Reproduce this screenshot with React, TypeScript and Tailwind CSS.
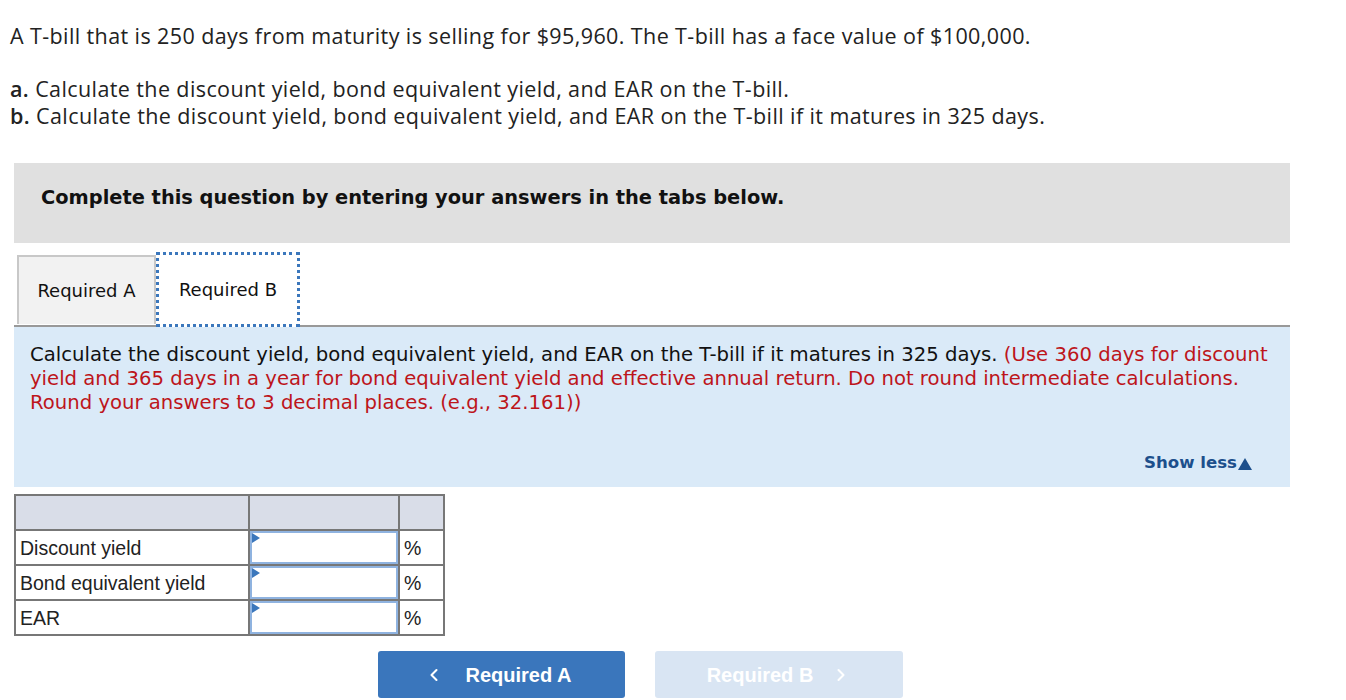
import { ChevronLeft, ChevronRight } from 'lucide-react';

const rows = ['Discount yield', 'Bond equivalent yield', 'EAR'];

function AnswerCell() {
  return (
    <div className="relative h-full w-full border-2 border-[#8fb3e0] bg-white">
      <span className="absolute left-0 top-0 h-0 w-0 border-y-[5px] border-l-[8px] border-y-transparent border-l-[#3b77bc]" />
    </div>
  );
}

export default function App() {
  return (
    <div className="min-h-screen bg-white">
      {/* Question stem */}
      <div className="pl-[10px] pt-[22px] font-['Open_Sans',sans-serif] text-[21.5px] leading-[27px] tracking-[0.4px] text-[#222]">
        <p>A T-bill that is 250 days from maturity is selling for $95,960. The T-bill has a face value of $100,000.</p>
        <p className="mt-[26px]">
          <b className="font-semibold">a.</b> Calculate the discount yield, bond equivalent yield, and EAR on the T-bill.
        </p>
        <p>
          <b className="font-semibold">b.</b> Calculate the discount yield, bond equivalent yield, and EAR on the T-bill if it matures in 325 days.
        </p>
      </div>

      <div className="ml-[14px] mt-[34px] w-[1276px]">
        {/* Instructions banner */}
        <div className="h-[80px] bg-[#e0e0e0] pl-[27px] pt-[20px] font-['DejaVu_Sans',sans-serif] text-[19.4px] font-bold text-[#111]">
          Complete this question by entering your answers in the tabs below.
        </div>

        {/* Tabs */}
        <div className="mt-[9px] flex items-end border-b-2 border-[#999] pl-[3px] font-['DejaVu_Sans',sans-serif]">
          <div className="mb-[1px] flex h-[69px] w-[139px] items-center justify-center border-2 border-b-0 border-[#c8c8c8] bg-[#f2f2f2] text-[18px] text-[#111]">
            Required A
          </div>
          <div className="-mb-[2px] flex h-[75px] w-[144px] items-center justify-center border-[3px] border-dotted border-[#3b77bc] bg-white text-[18px] text-[#111]">
            Required B
          </div>
        </div>

        {/* Prompt */}
        <div className="flex h-[160px] flex-col bg-[#daeaf8] px-[16px] pt-[16px] font-['DejaVu_Sans',sans-serif]">
          <p className="whitespace-nowrap text-[19.65px] leading-[24px] text-[#111]">
            Calculate the discount yield, bond equivalent yield, and EAR on the T-bill if it matures in 325 days.{' '}
            <span className="text-[#bd151b]">
              (Use 360 days for discount
              <br />
              yield and 365 days in a year for bond equivalent yield and effective annual return. Do not round intermediate calculations.
              <br />
              Round your answers to 3 decimal places. (e.g., 32.161))
            </span>
          </p>
          <div className="mb-[11px] mt-auto flex justify-end pr-[22px]">
            <button className="flex items-center text-[16.6px] font-bold text-[#1c4f8c]">
              Show less
              <span className="ml-[1px] h-0 w-0 border-x-[7px] border-b-[12px] border-x-transparent border-b-[#1c4f8c]" />
            </button>
          </div>
        </div>

        {/* Answer table */}
        <table className="mt-[7px] border-collapse font-['Liberation_Sans',Arial,sans-serif] text-[19.5px] text-[#222]">
          <tbody>
            <tr className="h-[35px] bg-[#d9dde8]">
              <td className="w-[234px] border-2 border-[#777]" />
              <td className="w-[150px] border-2 border-[#777]" />
              <td className="w-[45px] border-2 border-[#777]" />
            </tr>
            {rows.map((label) => (
              <tr key={label} className="h-[35px]">
                <td className="border-2 border-[#777] pl-[4px] align-middle leading-[20px]">{label}</td>
                <td className="h-[35px] border-2 border-[#777] p-0">
                  <AnswerCell />
                </td>
                <td className="border-2 border-[#777] pl-[4px] leading-[20px]">%</td>
              </tr>
            ))}
          </tbody>
        </table>

        {/* Navigation */}
        <div className="mt-[15px] flex gap-[30px] pl-[364px] font-['Liberation_Sans',Arial,sans-serif]">
          <button className="flex h-[47px] w-[247px] items-center justify-center gap-[22px] rounded-[3px] bg-[#3a76bc] pr-[8px] text-[20px] font-bold text-white">
            <ChevronLeft size={20} strokeWidth={2.5} />
            Required A
          </button>
          <button className="flex h-[47px] w-[248px] items-center justify-center gap-[18px] rounded-[3px] bg-[#d9e5f3] text-[20px] font-bold text-white">
            Required B
            <ChevronRight size={20} strokeWidth={2.5} />
          </button>
        </div>
      </div>
    </div>
  );
}
